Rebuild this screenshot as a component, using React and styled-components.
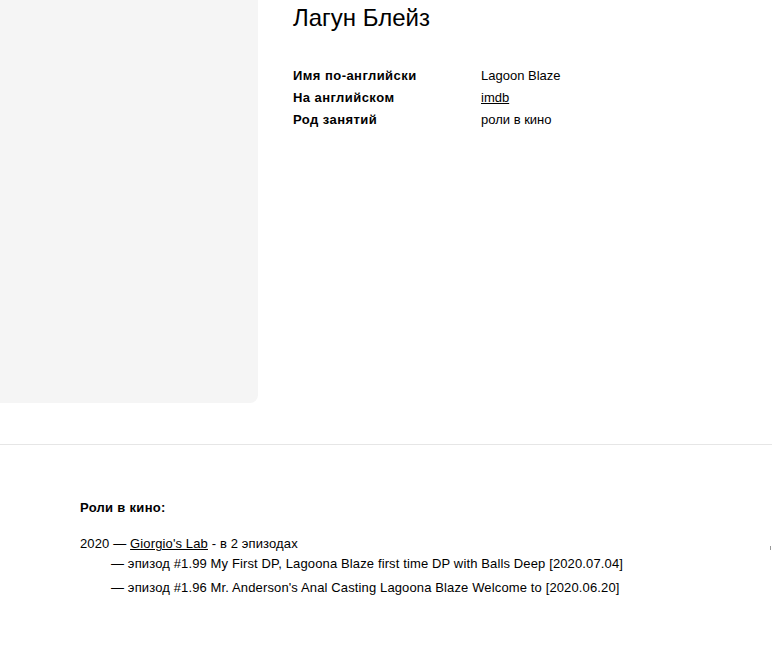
import React from "react";
import styled, { createGlobalStyle } from "styled-components";

const GlobalStyle = createGlobalStyle`
  html, body {
    margin: 0;
    padding: 0;
    background: #fff;
    color: #000;
    font-family: "Liberation Sans", Arial, sans-serif;
    font-size: 13px;
  }
`;

const info = [
  { label: "Имя по-английски", value: "Lagoon Blaze" },
  { label: "На английском", value: "imdb", link: true },
  { label: "Род занятий", value: "роли в кино" },
];

const episodes = [
  "— эпизод #1.99 My First DP, Lagoona Blaze first time DP with Balls Deep [2020.07.04]",
  "— эпизод #1.96 Mr. Anderson's Anal Casting Lagoona Blaze Welcome to [2020.06.20]",
];

const App = () => {
  return (
    <Page>
      <GlobalStyle />
      <Top>
        <Photo />
        <Info>
          <Name>Лагун Блейз</Name>
          <InfoTable>
            {info.map((row) => (
              <InfoRow key={row.label}>
                <Label>{row.label}</Label>
                {row.link ? <Link href="#">{row.value}</Link> : <Value>{row.value}</Value>}
              </InfoRow>
            ))}
          </InfoTable>
        </Info>
      </Top>
      <Roles>
        <RolesTitle>Роли в кино:</RolesTitle>
        <RoleList>
          <RoleLine>
            2020 — <Link href="#">Giorgio's Lab</Link> - в 2 эпизодах
          </RoleLine>
          <Episodes>
            {episodes.map((e) => (
              <Episode key={e}>{e}</Episode>
            ))}
          </Episodes>
        </RoleList>
      </Roles>
      <EdgeMark />
    </Page>
  );
};

const Page = styled.div`
  position: relative;
  width: 772px;
  min-height: 648px;
  overflow: hidden;
`;

const Top = styled.div`
  display: flex;
  align-items: flex-start;
`;

const Photo = styled.div`
  width: 258px;
  height: 403px;
  flex-shrink: 0;
  background: #f5f5f5;
  border-bottom-right-radius: 8px;
`;

const Info = styled.div`
  margin-left: 35px;
`;

const Name = styled.h1`
  margin: 0;
  padding-top: 3px;
  font-size: 24px;
  font-weight: normal;
  line-height: 30px;
`;

const InfoTable = styled.div`
  margin-top: 32px;
  display: flex;
  flex-direction: column;
`;

const InfoRow = styled.div`
  display: grid;
  grid-template-columns: 188px auto;
  line-height: 22px;
`;

const Label = styled.div`
  font-weight: bold;
  letter-spacing: 0.45px;
`;

const Value = styled.div``;

const Link = styled.a`
  color: #000;
  text-decoration: underline;
`;

const Roles = styled.div`
  margin-top: 41px;
  border-top: 1px solid #e6e6e6;
  padding: 52px 0 0 80px;
`;

const RolesTitle = styled.div`
  font-weight: bold;
  letter-spacing: 0.3px;
  line-height: 22px;
`;

const RoleList = styled.div`
  margin-top: 15px;
  line-height: 20px;
  letter-spacing: 0.13px;
`;

const RoleLine = styled.div``;

const Episodes = styled.div`
  display: flex;
  flex-direction: column;
  gap: 4px;
  padding-left: 31px;
`;

const Episode = styled.div``;

const EdgeMark = styled.div`
  position: absolute;
  right: 1px;
  top: 546px;
  width: 1px;
  height: 4px;
  background: #999;
`;

export default App;
